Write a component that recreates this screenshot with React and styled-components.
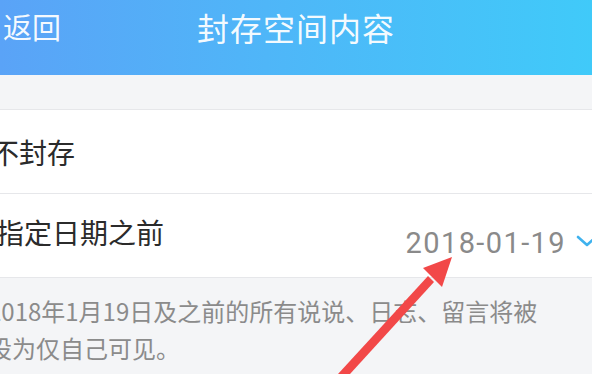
import React from 'react'
import styled, { createGlobalStyle } from 'styled-components'

const GlobalStyle = createGlobalStyle`
  html, body {
    margin: 0;
    padding: 0;
    background: #f4f5f7;
    overflow: hidden;
  }
  * {
    box-sizing: border-box;
  }
`

const cjk = `"Noto Sans CJK SC", "Noto Sans", sans-serif`

const Page = styled.div`
  position: relative;
  width: 592px;
  height: 374px;
  overflow: hidden;
  background: #f4f5f7;
  font-family: ${cjk};
`

const Header = styled.header`
  height: 75px;
  display: grid;
  grid-template-columns: 1fr auto 1fr;
  align-items: start;
  padding-top: 6px;
  background: linear-gradient(90deg, #5aa3f7 0%, #4fb6f8 45%, #40caf9 100%);
  color: rgba(255, 255, 255, 0.95);
`

const Back = styled.span`
  font-size: 29px;
  line-height: 40px;
  padding-left: 3px;
`

const Title = styled.h1`
  margin: 0;
  font-size: 32px;
  font-weight: 400;
  line-height: 42px;
  letter-spacing: 1px;
`

const Gap = styled.div`
  height: 35px;
  border-bottom: 1px solid #e6e7ea;
`

const Row = styled.div`
  height: 84px;
  display: flex;
  align-items: center;
  justify-content: space-between;
  background: #fff;
  border-bottom: 1px solid #e6e7ea;
  padding-bottom: ${(p) => p.$lift || 0}px;
`

const Label = styled.span`
  margin-left: ${(p) => p.$shift || -6}px;
  font-size: 28px;
  color: #2b2b2b;
`

const Picker = styled.div`
  display: flex;
  align-items: flex-start;
  gap: 10px;
  align-self: flex-end;
  padding-bottom: 6px;
  margin-right: -6px;
`

const DateText = styled.span`
  font-family: Roboto, "Liberation Sans", sans-serif;
  font-size: 29px;
  line-height: 40px;
  letter-spacing: 1.4px;
  color: #8a8a8a;
`

const ChevronBox = styled.svg`
  margin-top: 11px;
`

const Note = styled.p`
  margin: 0 0 0 -12px;
  padding-top: 14px;
  font-size: 24px;
  line-height: 37px;
  color: #8b8b8b;
  white-space: nowrap;
`

const Pointer = styled.svg`
  position: absolute;
  left: 0;
  top: 0;
  pointer-events: none;
`

const Chevron = () => (
  <ChevronBox width="22" height="14" viewBox="0 0 22 14">
    <polyline
      points="2,3 11,11 20,3"
      fill="none"
      stroke="#3fb2ee"
      strokeWidth="2.6"
      strokeLinecap="round"
      strokeLinejoin="round"
    />
  </ChevronBox>
)

export default function App() {
  return (
    <>
      <GlobalStyle />
      <Page>
        <Header>
          <Back>返回</Back>
          <Title>封存空间内容</Title>
          <span />
        </Header>
        <Gap />
        <Row>
          <Label $shift={-9}>不封存</Label>
        </Row>
        <Row $lift={8}>
          <Label $shift={-4}>指定日期之前</Label>
          <Picker>
            <DateText>2018-01-19</DateText>
            <Chevron />
          </Picker>
        </Row>
        <Note>
          2018年1月19日及之前的所有说说、日志、留言将被
          <br />
          设为仅自己可见。
        </Note>
        <Pointer width="592" height="374" viewBox="0 0 592 374">
          <polygon
            points="338,374 350,374 434,282 428,276"
            fill="#f24848"
          />
          <polygon points="452,257 442,287 423,268" fill="#f24848" />
        </Pointer>
      </Page>
    </>
  )
}
